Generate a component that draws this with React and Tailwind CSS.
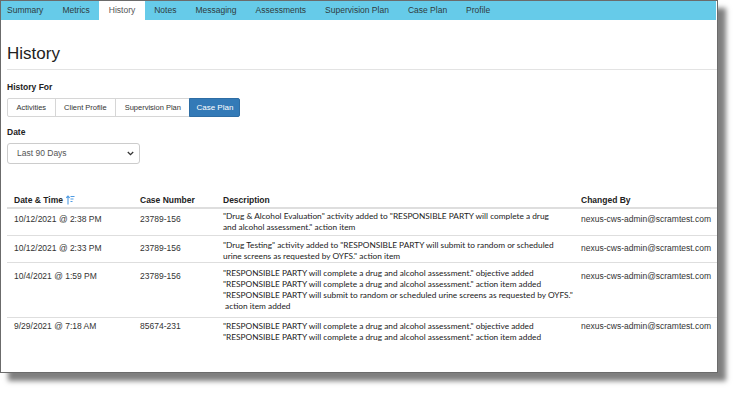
import React from 'react';

const tabs = ['Summary', 'Metrics', 'History', 'Notes', 'Messaging', 'Assessments', 'Supervision Plan', 'Case Plan', 'Profile'];
const filters = ['Activities', 'Client Profile', 'Supervision Plan', 'Case Plan'];

const rows = [
    {
        date: '10/12/2021 @ 2:38 PM',
        caseNo: '23789-156',
        desc: ['"Drug & Alcohol Evaluation" activity added to "RESPONSIBLE PARTY will complete a drug', 'and alcohol assessment." action item'],
        by: 'nexus-cws-admin@scramtest.com',
        h: 'h-[26px]',
        pt: 'pt-[5px]',
        dpt: 'pt-[2px]',
    },
    {
        date: '10/12/2021 @ 2:33 PM',
        caseNo: '23789-156',
        desc: ['"Drug Testing" activity added to "RESPONSIBLE PARTY will submit to random or scheduled', 'urine screens as requested by OYFS." action item'],
        by: 'nexus-cws-admin@scramtest.com',
        h: 'h-[26px]',
        pt: 'pt-[7px]',
        dpt: 'pt-[3.5px]',
    },
    {
        date: '10/4/2021 @ 1:59 PM',
        caseNo: '23789-156',
        desc: [
            '"RESPONSIBLE PARTY will complete a drug and alcohol assessment." objective added',
            '"RESPONSIBLE PARTY will complete a drug and alcohol assessment." action item added',
            '"RESPONSIBLE PARTY will submit to random or scheduled urine screens as requested by OYFS."',
            '\u00a0action item added',
        ],
        by: 'nexus-cws-admin@scramtest.com',
        h: 'h-[54px]',
        pt: 'pt-[7.5px]',
        dpt: 'pt-[5px]',
    },
    {
        date: '9/29/2021 @ 7:18 AM',
        caseNo: '85674-231',
        desc: [
            '"RESPONSIBLE PARTY will complete a drug and alcohol assessment." objective added',
            '"RESPONSIBLE PARTY will complete a drug and alcohol assessment." action item added',
        ],
        by: 'nexus-cws-admin@scramtest.com',
        h: 'h-[31px]',
        pt: 'pt-[3px]',
        dpt: 'pt-[3px]',
        last: true,
    },
];

const SortIcon = () => (
    <svg width="9" height="10" viewBox="0 0 9 10" className="ml-[3px]">
        <path d="M2 9.5V1M0.3 2.8L2 1l1.7 1.8" stroke="#4f9be3" strokeWidth="1.1" fill="none" />
        <path d="M4.5 1.5h4M4.5 4h3M4.5 6.5h2" stroke="#4f9be3" strokeWidth="1.1" />
    </svg>
);

const App = () => {
    return (
        <div className="w-[739px] h-[393px] bg-white font-['Liberation_Sans',Arial,sans-serif]">
            <div className="w-[718px] h-[373px] border border-[#6b6b6b] bg-white shadow-[8px_8px_5px_rgba(0,0,0,0.5)] overflow-hidden">
                {/* Tabs */}
                <div className="flex h-[19px] w-[715px] bg-[#66cbe9] text-[8.5px] text-[#2f3b40]">
                    {tabs.map((t, i) => (
                        <div
                            key={t}
                            className={`flex items-center ${i === 0 ? 'pl-[6px] pr-[9.5px]' : 'px-[9.5px]'} ${t === 'History' ? 'bg-white text-[#555]' : ''}`}
                        >
                            {t}
                        </div>
                    ))}
                </div>

                <div className="pl-[6px]">
                    <h1 className="mt-[24px] text-[17px] leading-[20px] text-[#222]">History</h1>
                    <div className="mt-[5px] h-px bg-[#e3e3e3] w-[710px]" />

                    <div className="mt-[12px] text-[8.5px] leading-[10px] font-bold text-[#222]">History For</div>
                    <div className="mt-[6px] flex h-[19px] text-[7.5px] text-[#333]">
                        {filters.map((f, i) => (
                            <div
                                key={f}
                                className={`flex items-center border ${i > 0 ? '-ml-px' : 'rounded-l-[2px]'} ${f === 'Case Plan'
                                    ? 'px-[6px] bg-[#337ab7] border-[#2e6da4] text-white text-[8px] rounded-r-[2px]'
                                    : 'px-[8.5px] bg-white border-[#d6d6d6]'
                                    }`}
                            >
                                {f}
                            </div>
                        ))}
                    </div>

                    <div className="mt-[10px] text-[8.5px] leading-[10px] font-bold text-[#222]">Date</div>
                    <div className="mt-[6px] flex items-center justify-between w-[133px] h-[21px] border border-[#ccc] rounded-[3px] pl-[9px] pr-[5px] text-[8.5px] text-[#555]">
                        <span>Last 90 Days</span>
                        <svg width="7" height="5" viewBox="0 0 7 5">
                            <path d="M0.8 1l2.7 2.6L6.2 1" stroke="#333" strokeWidth="1.3" fill="none" />
                        </svg>
                    </div>

                    {/* Table */}
                    <div className="mt-[31px] w-[710px] text-[8.5px] leading-[10px] text-[#333]">
                        <div className="grid grid-cols-[126px_83px_358px_143px] border-b-2 border-[#dedede] h-[12px] box-content font-bold text-[#222]">
                            <div className="pl-[7px] flex items-start">Date &amp; Time<SortIcon /></div>
                            <div className="pl-[7px]">Case Number</div>
                            <div className="pl-[7px]">Description</div>
                            <div className="pl-[7px]">Changed By</div>
                        </div>
                        {rows.map((r) => (
                            <div
                                key={r.date}
                                className={`grid grid-cols-[126px_83px_358px_143px] ${r.h} ${r.last ? '' : 'border-b border-[#dedede]'} box-content`}
                            >
                                <div className={`pl-[7px] ${r.pt}`}>{r.date}</div>
                                <div className={`pl-[7px] ${r.pt}`}>{r.caseNo}</div>
                                <div className={`pl-[7px] ${r.dpt} font-['Lato',sans-serif] text-[8.3px] leading-[11px] text-[#222] whitespace-nowrap`}>
                                    {r.desc.map((d, i) => (
                                        <div key={i}>{d}</div>
                                    ))}
                                </div>
                                <div className={`pl-[7px] ${r.pt}`}>{r.by}</div>
                            </div>
                        ))}
                    </div>
                </div>
            </div>
        </div>
    );
};

export default App;
